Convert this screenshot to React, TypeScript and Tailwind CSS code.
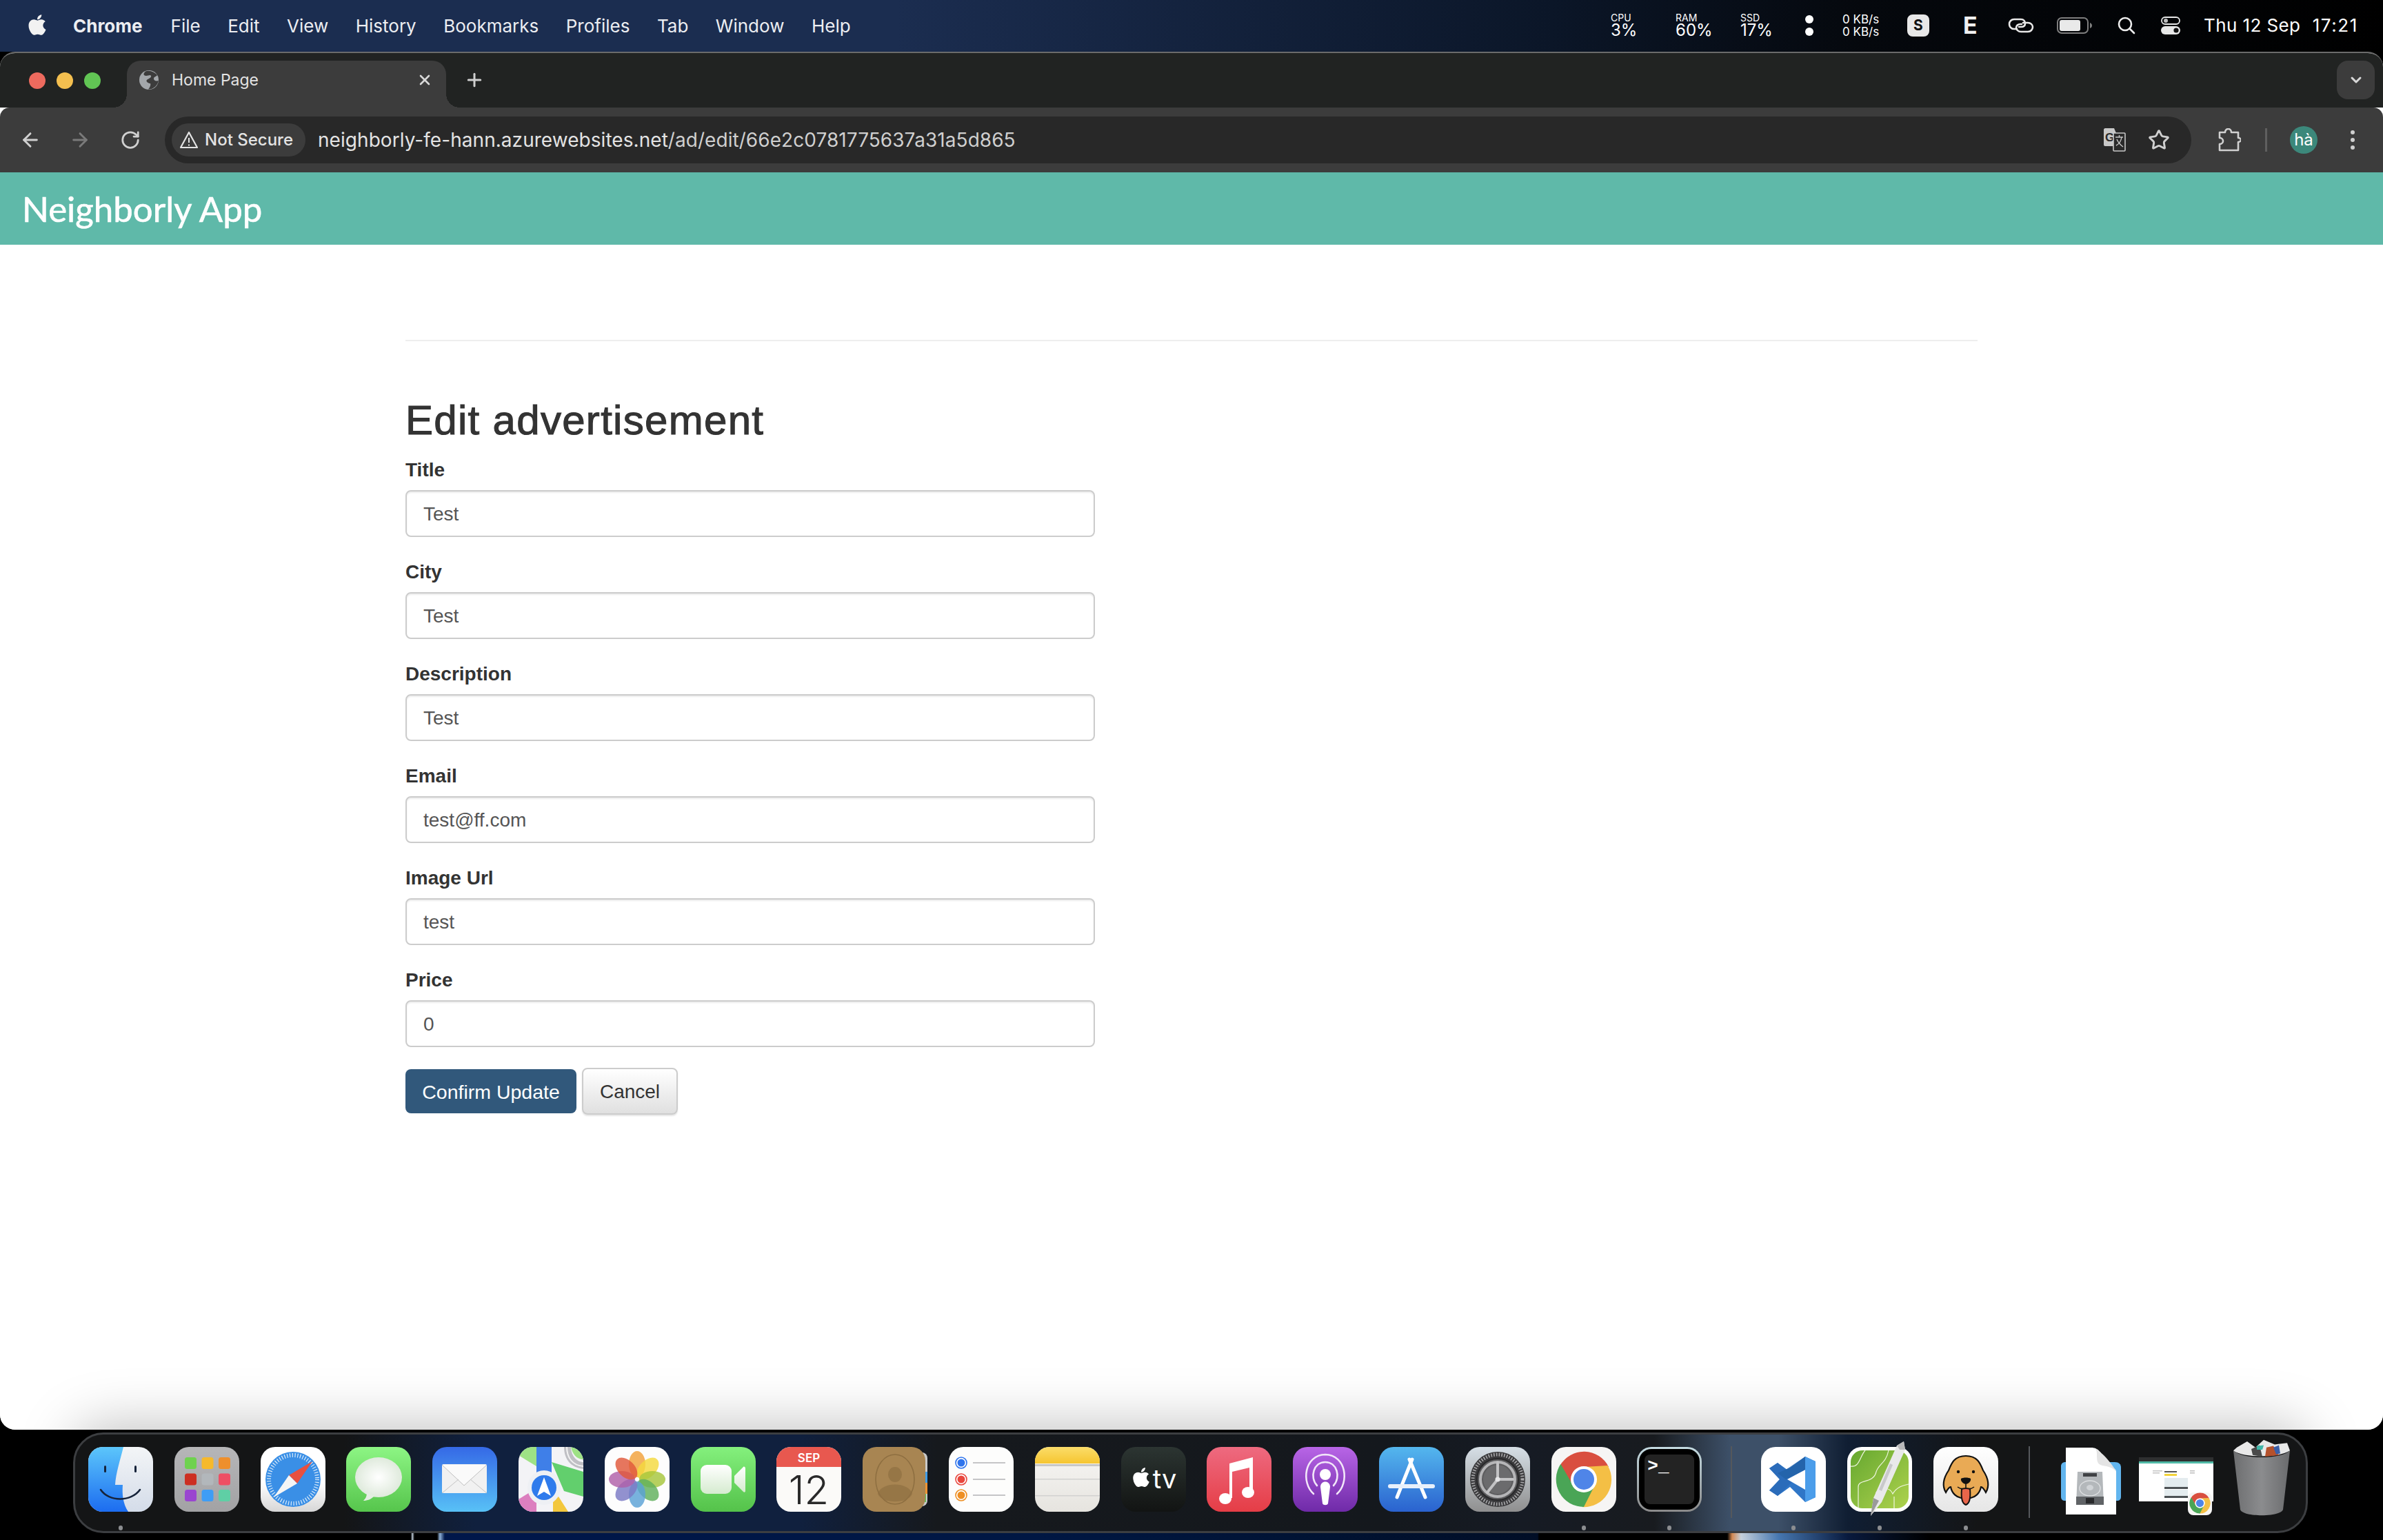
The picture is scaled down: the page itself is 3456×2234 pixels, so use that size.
import React from "react";
import { ArrowLeft, ArrowRight, RotateCw, Star, X, Plus, ChevronDown } from "lucide-react";
import { FaApple } from "react-icons/fa";

const ChromeMark = ({ cx, cy, r }: { cx: number; cy: number; r: number }) => {
  const red = "M-34.6,-20 A40,40 0 0 1 36,-18 L0,-18 A18,18 0 0 0 -15.6,9 Z";
  return (
    <g transform={`translate(${cx} ${cy}) scale(${r / 40})`}>
      <circle r="40" fill="#fff" />
      <path d={red} fill="#d94f3f" />
      <path d={red} fill="#f4bf45" transform="rotate(120)" />
      <path d={red} fill="#4aa556" transform="rotate(240)" />
      <circle r="19" fill="#fff" />
      <circle r="15" fill="#4f85e8" />
    </g>
  );
};

const Svg = ({ children }: { children: React.ReactNode }) => (
  <svg viewBox="0 0 94 94" className="w-[94px] h-[94px] overflow-visible block">
    {children}
  </svg>
);

const Finder = () => (
  <Svg>
    <defs>
      <linearGradient id="fa" x1="0" y1="0" x2="0" y2="1"><stop offset="0" stopColor="#5cc6fb" /><stop offset="1" stopColor="#1c6cf0" /></linearGradient>
      <linearGradient id="fb" x1="0" y1="0" x2="0" y2="1"><stop offset="0" stopColor="#f3f5f7" /><stop offset="1" stopColor="#d4dce9" /></linearGradient>
      <clipPath id="fc"><rect width="94" height="94" rx="21" /></clipPath>
    </defs>
    <g clipPath="url(#fc)">
      <rect width="94" height="94" fill="url(#fb)" />
      <path d="M0 0H51C46 20 40 38 39 55H50C49 68 50 82 58 94H0Z" fill="url(#fa)" />
    </g>
    <rect x="23" y="27" width="3" height="10" rx="1.5" fill="#16233a" />
    <rect x="67" y="27" width="3" height="10" rx="1.5" fill="#16233a" />
    <path d="M18 62C30 80 62 80 75 62" stroke="#16233a" strokeWidth="2.6" fill="none" strokeLinecap="round" />
  </Svg>
);

const Launchpad = () => {
  const c = ["#6fd24f", "#f6b92c", "#ee8f2c", "#cc2f22", "#b2b7bb", "#ee4f64", "#9a46d0", "#3e9df5", "#5fcfa5"];
  return (
    <Svg>
      <defs><linearGradient id="la" x1="0" y1="0" x2="0" y2="1"><stop offset="0" stopColor="#b6b6b8" /><stop offset="1" stopColor="#a2a2a4" /></linearGradient></defs>
      <rect width="94" height="94" rx="21" fill="url(#la)" />
      {c.map((col, i) => (
        <rect key={i} x={15 + (i % 3) * 24.5} y={15 + Math.floor(i / 3) * 23.5} width="17" height="17" rx="3.5" fill={col} />
      ))}
    </Svg>
  );
};

const Safari = () => (
  <Svg>
    <defs><linearGradient id="sa" x1="0" y1="0" x2="0" y2="1"><stop offset="0.55" stopColor="#fff" /><stop offset="1" stopColor="#d6d6d6" /></linearGradient></defs>
    <rect width="94" height="94" rx="21" fill="url(#sa)" />
    <circle cx="47" cy="47" r="40" fill="#3a8fe6" />
    <circle cx="47" cy="47" r="35" fill="none" stroke="#dcecfa" strokeWidth="6" strokeDasharray="1.2 2.6" />
    <path d="M75 21L53 53L41 41Z" fill="#e8503f" />
    <path d="M19 73L41 41L53 53Z" fill="#f5f5f5" />
  </Svg>
);

const Messages = () => (
  <Svg>
    <defs>
      <linearGradient id="ma" x1="0" y1="0" x2="0" y2="1"><stop offset="0" stopColor="#8df584" /><stop offset="1" stopColor="#56c54c" /></linearGradient>
      <radialGradient id="mb"><stop offset="0" stopColor="#ffffff" /><stop offset="1" stopColor="#dfeadc" /></radialGradient>
    </defs>
    <rect width="94" height="94" rx="21" fill="url(#ma)" />
    <ellipse cx="47" cy="44" rx="34" ry="29" fill="url(#mb)" />
    <path d="M30 66C30 72 28 75 25 78C31 78 36 76 41 71Z" fill="#e4eee2" />
  </Svg>
);

const Mail = () => (
  <Svg>
    <defs><linearGradient id="ml" x1="0" y1="0" x2="0" y2="1"><stop offset="0" stopColor="#3569e6" /><stop offset="1" stopColor="#58c1f6" /></linearGradient></defs>
    <rect width="94" height="94" rx="21" fill="url(#ml)" />
    <rect x="14" y="25" width="65" height="42" rx="2" fill="#f1f1f1" />
    <path d="M14 26L46 56L79 26" fill="#fafafa" stroke="#c0c0c0" strokeWidth="1" />
    <path d="M14 67L38 47M79 67L55 47" stroke="#c4c4c4" strokeWidth="1" />
  </Svg>
);

const Maps = () => (
  <Svg>
    <defs><clipPath id="mp"><rect width="94" height="94" rx="21" /></clipPath></defs>
    <g clipPath="url(#mp)">
      <rect width="94" height="94" fill="#f3f3f6" />
      <path d="M0 0H26V28L0 12Z" fill="#9ee285" />
      <path d="M48 22L94 36V72L66 64Z" fill="#62cf6d" />
      <rect x="26" y="0" width="22" height="40" fill="#3f7fe8" />
      <path d="M66 0C66 18 76 30 94 32V22C84 22 76 12 76 0Z" fill="#bfbfc4" />
      <path d="M70 0C70 15 78 27 94 28" stroke="#f2f2f2" strokeWidth="2" fill="none" />
      <path d="M76 0H94V18C84 18 78 10 76 0Z" fill="#9ee285" />
      <path d="M0 76L26 60V94H0Z" fill="#dc7fbf" />
      <path d="M50 94V78L58 72L72 94Z" fill="#f3c73d" />
    </g>
    <ellipse cx="37" cy="59" rx="24" ry="25" fill="#eef0f4" />
    <circle cx="37" cy="59" r="18" fill="#2f7bec" />
    <path d="M37 44L47 71L37 65L27 71Z" fill="#fff" />
  </Svg>
);

const Photos = () => {
  const cols = ["#f2a13b", "#f4d93e", "#a6c63c", "#5fb05c", "#5aa1d6", "#7a79c4", "#b05fa8", "#e0583b"];
  return (
    <Svg>
      <rect width="94" height="94" rx="21" fill="#fdfdfd" />
      {cols.map((c, i) => (
        <ellipse key={i} cx="47" cy="25" rx="12" ry="19" fill={c} opacity="0.82" transform={`rotate(${i * 45} 47 47)`} />
      ))}
    </Svg>
  );
};

const FaceTime = () => (
  <Svg>
    <defs>
      <linearGradient id="fta" x1="0" y1="0" x2="0" y2="1"><stop offset="0" stopColor="#84f07d" /><stop offset="1" stopColor="#54c24a" /></linearGradient>
      <linearGradient id="ftb" x1="0" y1="0" x2="0" y2="1"><stop offset="0" stopColor="#fff" /><stop offset="1" stopColor="#d5ebcf" /></linearGradient>
    </defs>
    <rect width="94" height="94" rx="21" fill="url(#fta)" />
    <rect x="14" y="26" width="45" height="42" rx="9" fill="url(#ftb)" />
    <path d="M63 42L76 29C77 28 79 29 79 31V64C79 66 77 66 76 65L63 52Z" fill="url(#ftb)" />
  </Svg>
);

const Calendar = () => (
  <Svg>
    <defs><clipPath id="ca"><rect width="94" height="94" rx="21" /></clipPath></defs>
    <g clipPath="url(#ca)">
      <rect width="94" height="94" fill="#fbfaf8" />
      <rect width="94" height="29" fill="#e8584f" />
    </g>
    <text x="47" y="22" textAnchor="middle" fontFamily="Inter, sans-serif" fontWeight="600" fontSize="17" fill="#fff">SEP</text>
    <text x="47" y="83" textAnchor="middle" fontFamily="Inter, sans-serif" fontWeight="300" fontSize="58" fill="#2a2a2a">12</text>
  </Svg>
);

const Contacts = () => (
  <Svg>
    <rect x="70" y="8" width="24" height="78" rx="8" fill="#c9c9c9" />
    <rect x="86" y="36" width="8" height="16" fill="#3f9de8" />
    <rect x="86" y="52" width="8" height="16" fill="#ee9434" />
    <rect x="86" y="68" width="6" height="12" fill="#5cc75a" />
    <rect width="91" height="94" rx="20" fill="#a88552" />
    <ellipse cx="47" cy="47" rx="28" ry="36" fill="none" stroke="#8e6f41" strokeWidth="1.6" />
    <ellipse cx="47" cy="40" rx="10" ry="11" fill="#8e6f41" opacity="0.7" />
    <path d="M22 68C27 50 67 50 72 68C66 83 28 83 22 68Z" fill="#8e6f41" opacity="0.7" />
  </Svg>
);

const Reminders = () => (
  <Svg>
    <rect width="94" height="94" rx="21" fill="#fdfdfc" />
    {[["#2f74ec", 23], ["#e8473d", 47], ["#ee8f23", 70]].map(([c, y], i) => (
      <g key={i}>
        <ellipse cx="18" cy={y as number} rx="8" ry="8" fill="#fff" stroke={c as string} strokeWidth="1.6" />
        <circle cx="18" cy={y as number} r="5.5" fill={c as string} />
        <rect x="35" y={(y as number) - 1} width="47" height="2" fill="#c5c5c7" />
      </g>
    ))}
  </Svg>
);

const Notes = () => (
  <Svg>
    <defs>
      <clipPath id="na"><rect width="94" height="94" rx="21" /></clipPath>
      <linearGradient id="nb" x1="0" y1="0" x2="0" y2="1"><stop offset="0" stopColor="#fbdd6a" /><stop offset="1" stopColor="#f6c530" /></linearGradient>
      <linearGradient id="nc" x1="0" y1="0" x2="0" y2="1"><stop offset="0" stopColor="#f8f7f5" /><stop offset="1" stopColor="#e6e4df" /></linearGradient>
    </defs>
    <g clipPath="url(#na)">
      <rect width="94" height="94" fill="url(#nc)" />
      <rect width="94" height="24" fill="url(#nb)" />
      <rect y="25" width="94" height="3" fill="#c8c8c6" />
      <rect y="46" width="94" height="1.5" fill="#d2d2d0" />
      <rect y="70" width="94" height="1.5" fill="#d2d2d0" />
    </g>
  </Svg>
);

const Tv = () => (
  <div className="relative w-[94px] h-[94px] rounded-[21px] bg-gradient-to-b from-[#2c3532] to-[#121413] flex items-center justify-center text-white">
    <FaApple size={32} className="mb-[6px]" />
    <span className="font-['Inter',sans-serif] text-[38px] leading-none font-normal ml-[1px] mb-[2px]">tv</span>
  </div>
);

const Music = () => (
  <Svg>
    <defs><linearGradient id="mu" x1="0" y1="0" x2="0" y2="1"><stop offset="0" stopColor="#ee6a80" /><stop offset="1" stopColor="#e53d46" /></linearGradient></defs>
    <rect width="94" height="94" rx="21" fill="url(#mu)" />
    <path d="M33 24L67 15V66H62V30L37 36V74H33Z" fill="#fff" />
    <ellipse cx="27" cy="75" rx="9" ry="8" fill="#fff" />
    <ellipse cx="60" cy="66" rx="9" ry="8" fill="#fff" />
  </Svg>
);

const Podcasts = () => (
  <Svg>
    <defs><linearGradient id="po" x1="0" y1="0" x2="0" y2="1"><stop offset="0" stopColor="#b865e6" /><stop offset="1" stopColor="#6f2aa8" /></linearGradient></defs>
    <rect width="94" height="94" rx="21" fill="url(#po)" />
    <path d="M30 68C12 52 16 12 47 11C78 12 82 52 64 68" fill="none" stroke="#f2e6f9" strokeWidth="2.6" strokeLinecap="round" />
    <path d="M35 56C24 44 30 22 47 22C64 22 70 44 59 56" fill="none" stroke="#f2e6f9" strokeWidth="2.6" strokeLinecap="round" />
    <circle cx="47" cy="40" r="8" fill="#fff" />
    <path d="M40 58C40 48 54 48 54 58L51 82C50 85 44 85 43 82Z" fill="#fff" />
  </Svg>
);

const AppStore = () => (
  <Svg>
    <defs><linearGradient id="ap" x1="0" y1="0" x2="0" y2="1"><stop offset="0" stopColor="#54b7ee" /><stop offset="1" stopColor="#2a62cf" /></linearGradient></defs>
    <rect width="94" height="94" rx="21" fill="url(#ap)" />
    <g stroke="#fff" strokeLinecap="round" fill="none">
      <path d="M48 18L26 73" strokeWidth="5" />
      <path d="M44 18L67 73" strokeWidth="5" />
      <path d="M16 57H78" strokeWidth="6" stroke="#e8f0fb" />
    </g>
  </Svg>
);

const Settings = () => (
  <Svg>
    <defs><linearGradient id="se" x1="0" y1="0" x2="0" y2="1"><stop offset="0" stopColor="#d6dfe6" /><stop offset="1" stopColor="#8f8f8f" /></linearGradient></defs>
    <rect width="94" height="94" rx="21" fill="url(#se)" />
    <circle cx="47" cy="47" r="40" fill="#3a3a3c" />
    <circle cx="47" cy="47" r="36" fill="none" stroke="#a8a8aa" strokeWidth="5" strokeDasharray="1.6 2.2" />
    <circle cx="47" cy="47" r="30" fill="#5c5c5e" stroke="#28282a" strokeWidth="2" />
    <circle cx="47" cy="47" r="25" fill="none" stroke="#b5b5b7" strokeWidth="4" />
    <circle cx="47" cy="47" r="21" fill="#6b6b6d" />
    <g stroke="#c2c2c4" strokeWidth="4" strokeLinecap="round">
      <path d="M47 47L47 23" />
      <path d="M47 47L69 47" />
      <path d="M47 47L32 66" />
    </g>
    <circle cx="47" cy="47" r="3.5" fill="#e4e4e6" />
  </Svg>
);

const ChromeIcon = () => (
  <Svg>
    <rect width="94" height="94" rx="21" fill="#f6f5f4" />
    <ChromeMark cx={47} cy={47} r={40} />
  </Svg>
);

const Terminal = () => (
  <div className="w-[94px] h-[94px] rounded-[21px] bg-gradient-to-b from-[#c4dbe2] to-[#8a8a8a] p-[3px]">
    <div className="w-full h-full rounded-[18px] bg-black p-[8px]">
      <div className="w-full h-full rounded-[8px] bg-[#232323] relative">
        <span className="absolute left-[4px] top-[0px] font-['Liberation_Mono',monospace] text-[26px] leading-[34px] font-bold text-white">&gt;_</span>
      </div>
    </div>
  </div>
);

const VsCode = () => (
  <Svg>
    <rect width="94" height="94" rx="21" fill="#fff" />
    <path d="M64 14L79 21V73L64 80L42 58L24 71L12 63L27 47L12 31L24 23L42 36Z" fill="#2f76c7" />
    <path d="M64 14L79 21V73L64 80Z" fill="#4b9dea" />
    <path d="M24 23L12 31L27 47L12 63L24 71L64 33V14L36 33Z" fill="#2b6ab6" opacity="0.75" />
    <path d="M64 33L38 47L64 62Z" fill="#fff" />
    <path d="M64 14V33L36 47L24 38L42 30Z" fill="#2464ab" />
  </Svg>
);

const PenMap = () => (
  <Svg>
    <defs><linearGradient id="pm" x1="0" y1="0" x2="1" y2="1"><stop offset="0" stopColor="#66a830" /><stop offset="1" stopColor="#aed24d" /></linearGradient></defs>
    <rect width="94" height="94" rx="21" fill="#fff" />
    <rect x="5" y="5" width="84" height="84" rx="17" fill="url(#pm)" />
    <g stroke="#eef5df" strokeWidth="1.2" fill="none">
      <path d="M5 28C18 30 18 14 26 5" />
      <path d="M16 89V58C16 46 38 54 42 36C46 24 56 24 60 5" />
      <path d="M42 89V66C48 58 62 58 66 68C72 58 80 56 89 54" />
      <path d="M68 89V72" />
    </g>
    <path d="M34 100L38 74L72 -2L82 -8L84 4L50 80Z" fill="#e9e9ea" />
    <path d="M34 100L38 74L46 78Z" fill="#9a9a9a" />
    <path d="M72 -2L82 -8L84 4L76 4Z" fill="#b9b9bb" />
    <path d="M62 24L66 26L50 64L46 62Z" fill="#c9c9cb" />
  </Svg>
);

const Dog = () => (
  <Svg>
    <defs><linearGradient id="dg" x1="0" y1="0" x2="0" y2="1"><stop offset="0" stopColor="#fff" /><stop offset="1" stopColor="#e6e6e6" /></linearGradient></defs>
    <rect width="94" height="94" rx="21" fill="url(#dg)" />
    <path d="M47 13C30 13 26 24 22 34C14 46 12 56 18 66C21 60 24 58 25 58C27 68 34 73 40 74L47 74L54 74C60 73 67 68 69 58C70 58 73 60 76 66C82 56 80 46 72 34C68 24 64 13 47 13Z" fill="#e9aa55" stroke="#111" strokeWidth="2.2" />
    <circle cx="36" cy="36" r="2.2" fill="#111" />
    <circle cx="58" cy="36" r="2.2" fill="#111" />
    <path d="M40 46C43 44 51 44 54 46C55 50 50 54 47 54C44 54 39 50 40 46Z" fill="#111" />
    <path d="M47 54V60M35 58C40 62 44 61 47 60C50 61 54 62 59 58" stroke="#111" strokeWidth="1.6" fill="none" />
    <path d="M41 61C44 60 50 60 53 61C54 72 53 82 47 84C41 82 40 72 41 61Z" fill="#e8654a" stroke="#111" strokeWidth="2" />
  </Svg>
);

const DocFolder = () => (
  <Svg>
    <path d="M0 28C0 24 3 22 6 22H78C84 22 87 25 87 30V72C87 76 85 78 81 78H6C2 78 0 76 0 72Z" fill="#62b5ee" />
    <path d="M7 1H43C50 1 54 3 59 10L74 28C75 30 80 32 80 36V98H7Z" fill="#fff" />
    <path d="M48 1C50 3 52 4 52 10C52 20 52 25 60 27C68 28 76 30 80 36C74 24 60 8 48 1Z" fill="#e4e4e4" />
    <path d="M24 36H60L62 84H22Z" fill="#b4b8bb" />
    <rect x="22" y="72" width="40" height="12" fill="#606366" />
    <rect x="32" y="38" width="20" height="5" fill="#404245" />
    <ellipse cx="42" cy="60" rx="15" ry="11" fill="none" stroke="#dddfe1" strokeWidth="1.4" />
    <ellipse cx="42" cy="59" rx="5" ry="4" fill="#d0d3d6" />
    <rect x="36" y="74" width="12" height="8" fill="#28292b" />
  </Svg>
);

const WindowThumb = () => (
  <Svg>
    <rect x="0" y="15" width="108" height="64" fill="#fff" />
    <rect x="0" y="15" width="108" height="6" fill="#2e2f30" />
    <rect x="0" y="21" width="108" height="3" fill="#4fb9a6" />
    <rect x="20" y="34" width="14" height="1.5" fill="#c4c4c4" />
    <rect x="20" y="37" width="10" height="1.5" fill="#c4c4c4" />
    <rect x="37" y="35" width="18" height="2" fill="#555" />
    <rect x="37" y="39" width="18" height="3" fill="#f3d33b" />
    <rect x="37" y="45" width="34" height="13" fill="#e4ecef" />
    <rect x="37" y="58" width="34" height="3" fill="#4d5255" />
    <rect x="37" y="62" width="34" height="9" fill="#e4ecef" />
    <rect x="37" y="71" width="34" height="3" fill="#4d5255" />
    <rect x="74" y="34" width="7" height="1.5" fill="#bdbdbd" />
    <rect x="74" y="37" width="7" height="1.5" fill="#bdbdbd" />
    <rect x="71" y="66" width="35" height="33" rx="8" fill="#f6f5f4" />
    <ChromeMark cx={88.5} cy={81.5} r={15} />
  </Svg>
);

const Trash = () => (
  <Svg>
    <defs><linearGradient id="tr" x1="0" y1="0" x2="1" y2="0"><stop offset="0" stopColor="#6d6e70" /><stop offset="0.5" stopColor="#8b8c8e" /><stop offset="1" stopColor="#6a6b6d" /></linearGradient></defs>
    <g transform="translate(0 -8) scale(1 1.1)">
      <path d="M0 12C14 24 68 24 82 12L72 90C68 100 14 100 10 90Z" fill="url(#tr)" />
      <path d="M5 8L20 0L32 8L44 -2L60 4L78 2L82 12C66 22 14 22 0 12Z" fill="#e8e8e8" />
      <path d="M26 10L38 5L42 20L28 18Z" fill="#4a4a4a" />
      <path d="M34 6L44 5L42 11L34 11Z" fill="#3fb6a8" />
      <path d="M48 8L58 6L66 18L46 20Z" fill="#b5512c" />
      <path d="M58 8L66 5L68 16L62 17Z" fill="#3a5fa8" />
    </g>
  </Svg>
);

const DockItem = ({ icon, dot }: { icon: React.ReactNode; dot?: boolean }) => (
  <div className="w-[94px] flex flex-col items-center">
    {icon}
    <div className={`mt-[20px] w-[6px] h-[7px] rounded-full ${dot ? "bg-[#8b8d90]" : "bg-transparent"}`} />
  </div>
);

const Dock = () => (
  <div className="relative z-10 ml-[106px] mt-[4px] w-[3241px] h-[146px] rounded-[44px] border-[3px] border-[#3c3e41] pt-[18px] pl-[19px] flex shadow-[0_-10px_80px_rgba(0,0,0,0.25)] bg-[linear-gradient(90deg,#141516_0px,#141516_390px,#10203e_580px,#10203e_1050px,#16191d_1250px,#14181d_1900px,#161b24_2100px,#181b1f_2290px,#3d5068_2400px,#3d5068_2470px,#101e33_2570px,#141516_2760px,#141516_3241px)]">
    <div className="flex gap-[30.8px]">
      <DockItem icon={<Finder />} dot />
      <DockItem icon={<Launchpad />} />
      <DockItem icon={<Safari />} />
      <DockItem icon={<Messages />} />
      <DockItem icon={<Mail />} />
      <DockItem icon={<Maps />} />
      <DockItem icon={<Photos />} />
      <DockItem icon={<FaceTime />} />
      <DockItem icon={<Calendar />} />
      <DockItem icon={<Contacts />} />
      <DockItem icon={<Reminders />} />
      <DockItem icon={<Notes />} />
      <DockItem icon={<Tv />} />
      <DockItem icon={<Music />} />
      <DockItem icon={<Podcasts />} />
      <DockItem icon={<AppStore />} />
      <DockItem icon={<Settings />} />
      <DockItem icon={<ChromeIcon />} dot />
      <DockItem icon={<Terminal />} dot />
    </div>
    <div className="w-[2px] h-[104px] bg-[#55585c] ml-[42px] mr-[42px] -mt-[1px]" />
    <div className="flex gap-[31px]">
      <DockItem icon={<VsCode />} dot />
      <DockItem icon={<PenMap />} dot />
      <DockItem icon={<Dog />} dot />
    </div>
    <div className="w-[2px] h-[104px] bg-[#55585c] ml-[44px] mr-[45px] -mt-[1px]" />
    <div className="flex">
      <div className="w-[113px]"><DocFolder /></div>
      <div className="w-[137px]"><WindowThumb /></div>
      <div className="w-[90px]"><Trash /></div>
    </div>
  </div>
);

const Stat = ({ label, value, w }: { label: string; value: string; w: string }) => (
  <div className={`${w} -mt-[3px]`}>
    <div className="text-[14px] leading-[15px]">{label}</div>
    <div className="text-[24px] leading-[22px]">{value}</div>
  </div>
);

const MenuBar = () => {
  const items = ["File", "Edit", "View", "History", "Bookmarks", "Profiles", "Tab", "Window", "Help"];
  return (
    <div className="h-[75px] shrink-0 flex items-center text-[#eceef2] font-['Inter',sans-serif] bg-[linear-gradient(90deg,#1b2d50_0px,#1b2d50_1300px,#0b1628_2250px,#05080d_2700px,#000000_3456px)]">
      <FaApple className="ml-[37px] mr-[35px] text-[#f2f2f2] -mt-[3px]" size={34} />
      <span className="text-[26px] font-bold mr-[41px]">Chrome</span>
      <div className="flex gap-[39.5px] text-[26px]">
        {items.map((m) => (
          <span key={m}>{m}</span>
        ))}
      </div>
      <div className="ml-auto flex items-center text-white">
        <Stat label="CPU" value="3%" w="w-[94px]" />
        <Stat label="RAM" value="60%" w="w-[94px]" />
        <Stat label="SSD" value="17%" w="w-[93px]" />
        <div className="w-[14px] flex flex-col items-center gap-[6px] -mt-[2px]">
          <div className="w-[12px] h-[12px] rounded-full bg-white" />
          <div className="w-[12px] h-[12px] rounded-full bg-white" />
        </div>
        <div className="ml-[41px] w-[94px] text-[17px] leading-[18px] -mt-[2px] whitespace-nowrap">
          <div>0 KB/s</div>
          <div>0 KB/s</div>
        </div>
        <div className="w-[32px] h-[32px] rounded-[8px] bg-[#e8e8e8] text-[#111] flex items-center justify-center text-[21px] font-bold -mt-[2px]">S</div>
        <span className="ml-[49px] w-[24px] text-[34px] font-bold leading-none text-[#f0f0f0] -mt-[2px]">E</span>
        <svg className="ml-[41px] w-[38px] h-[24px] -mt-[2px]" viewBox="0 0 38 24" fill="none" stroke="#e8e8e8" strokeWidth="2.6">
          <path d="M13 17H9C4 17 2 13 2 10C2 6 5 3 9 3H19C23 3 25 6 25 9C25 12 23 14 19 14H16" strokeLinecap="round" />
          <path d="M22 8H29C33 8 36 11 36 14C36 18 33 21 29 21H19C15 21 12 18 12 15C12 12 15 10 18 10H20" strokeLinecap="round" />
        </svg>
        <svg className="ml-[33px] w-[52px] h-[24px] -mt-[2px]" viewBox="0 0 52 24" fill="none">
          <rect x="1" y="1" width="44" height="22" rx="6" stroke="#7e7e7e" strokeWidth="2" />
          <rect x="4" y="4" width="30" height="16" rx="3" fill="#e9e9e9" />
          <path d="M48 8C50 9 51 10 51 12C51 14 50 15 48 16Z" fill="#7e7e7e" />
        </svg>
        <svg className="ml-[36px] w-[26px] h-[26px] -mt-[2px]" viewBox="0 0 26 26" fill="none" stroke="#ededed" strokeWidth="2.6">
          <circle cx="11" cy="11" r="9" />
          <path d="M17.5 17.5L24 24" strokeLinecap="round" />
        </svg>
        <svg className="ml-[37px] w-[28px] h-[26px] -mt-[2px]" viewBox="0 0 28 26">
          <rect x="1" y="1" width="26" height="10" rx="5" fill="none" stroke="#e8e8e8" strokeWidth="1.8" />
          <circle cx="7" cy="6" r="3" fill="#bdbdbd" />
          <rect x="0" y="14" width="28" height="12" rx="6" fill="#e8e8e8" />
          <circle cx="22" cy="20" r="3.6" fill="#111" />
        </svg>
        <div className="ml-[34px] mr-[36px] w-[224px] flex justify-between text-[26px] whitespace-nowrap -mt-[2px]">
          <span className="tracking-[0.4px]">Thu 12 Sep</span>
          <span className="tracking-[1.6px]">17:21</span>
        </div>
      </div>
    </div>
  );
};

const Globe = () => (
  <svg viewBox="0 0 28 28" className="w-[28px] h-[28px]">
    <circle cx="14" cy="14" r="14" fill="#a3a7ab" />
    <path d="M9 1.5C5 5 6 8 10 8C13 8 16 6 17 8C18 11 13 12 11 14C9 16 13 19 16 19C17 22 15 25 13 27.5C21 28 27 21 27.8 15C24 16 21 15 21 12C21 9 25 9 26 7C23 3 15 -1 9 1.5Z" fill="#3c3c3c" />
  </svg>
);

const Translate = () => (
  <svg viewBox="0 0 34 34" className="w-[34px] h-[34px]">
    <path d="M2 2C2 1 3 0 4 0H17L28 26H4C3 26 2 25 2 24Z" fill="#c8c8c8" />
    <text x="4" y="19" fontFamily="'Liberation Sans',sans-serif" fontWeight="700" fontSize="17" fill="#2a2a2a">G</text>
    <rect x="16" y="7" width="17" height="26" rx="1" fill="#2a2a2a" stroke="#c8c8c8" strokeWidth="1.6" />
    <path d="M19 13H30M24.5 10V13M28 13C27 19 24 23 20 25M21 16C23 21 26 24 30 27" stroke="#c8c8c8" strokeWidth="1.4" fill="none" />
  </svg>
);

const ExtIcon = () => (
  <svg viewBox="0 0 34 34" className="w-[34px] h-[34px]" fill="none" stroke="#d0d0d0" strokeWidth="2.6" strokeLinejoin="round">
    <path d="M3 6H11C11 2 14 1 15.500 1C17 1 20 2 20 6H30V14C33 14 34 16 34 17C34 18 33 20 30 20V32H3V23C7 23 8 20 8 18.500C8 17 7 14 3 14Z" />
  </svg>
);

const Toolbar = () => (
  <div className="h-[94px] shrink-0 bg-[#3c3c3c] rounded-t-[14px] flex items-center pl-[28px] text-[#c8c8c8] font-['Inter',sans-serif]">
    <ArrowLeft size={32} strokeWidth={2.2} className="text-[#d0d0d0]" />
    <ArrowRight size={32} strokeWidth={2.2} className="ml-[40px] text-[#7a7a7a]" />
    <RotateCw size={30} strokeWidth={2.2} className="ml-[42px] text-[#d0d0d0]" />
    <div className="ml-[35px] w-[2939px] h-[68px] rounded-full bg-[#282828] flex items-center pl-[10px] pr-[31px]">
      <div className="h-[48px] w-[194px] rounded-full bg-[#3c3c3c] flex items-center pl-[11px] text-[#e3e3e3] whitespace-nowrap">
        <svg viewBox="0 0 28 28" className="w-[28px] h-[28px]" fill="none" stroke="#e3e3e3" strokeWidth="2.2" strokeLinejoin="round">
          <path d="M14 3L26 25H2Z" />
          <path d="M14 11V18M14 20.500V22.500" strokeWidth="2" />
        </svg>
        <span className="ml-[9px] text-[24px] font-medium">Not Secure</span>
      </div>
      <div className="ml-[18px] text-[28px] tracking-[0.05px] text-[#e3e3e3] whitespace-nowrap">
        neighborly-fe-hann.azurewebsites.net<span className="text-[#cfcfcf]">/ad/edit/66e2c0781775637a31a5d865</span>
      </div>
      <div className="ml-auto flex items-center">
        <Translate />
        <Star size={32} strokeWidth={2.2} className="ml-[32px] text-[#cfcfcf]" />
      </div>
    </div>
    <div className="ml-[38px]"><ExtIcon /></div>
    <div className="ml-[35px] w-[3px] h-[34px] bg-[#5f5f5f]" />
    <div className="ml-[33px] w-[40px] h-[40px] rounded-full bg-[#3c887b] text-white flex items-center justify-center text-[24px]">hà</div>
    <div className="ml-[48px] flex flex-col gap-[5px]">
      <div className="w-[6px] h-[6px] rounded-full bg-[#cfcfcf]" />
      <div className="w-[6px] h-[6px] rounded-full bg-[#cfcfcf]" />
      <div className="w-[6px] h-[6px] rounded-full bg-[#cfcfcf]" />
    </div>
  </div>
);

const TabStrip = () => (
  <div className="h-[79px] shrink-0 flex bg-[#212322] font-['Inter',sans-serif]">
    <div className="flex items-center gap-[16px] pl-[42px] h-[80px]">
      <div className="w-[24px] h-[24px] rounded-full bg-[#ed6a5e]" />
      <div className="w-[24px] h-[24px] rounded-full bg-[#f4bf4f]" />
      <div className="w-[24px] h-[24px] rounded-full bg-[#61c554]" />
    </div>
    <div className="relative ml-[38px] mt-[11px] w-[463px] h-[68px] bg-[#3c3c3c] rounded-t-[20px] flex items-center pl-[18px] pr-[19px] text-[#e3e3e3] pb-[12px]">
      <div className="absolute -left-[20px] bottom-0 w-[20px] h-[20px] bg-[radial-gradient(circle_at_0_0,transparent_20px,#3c3c3c_20px)]" />
      <div className="absolute -right-[20px] bottom-0 w-[20px] h-[20px] bg-[radial-gradient(circle_at_100%_0,transparent_20px,#3c3c3c_20px)]" />
      <Globe />
      <span className="ml-[19px] text-[23px]">Home Page</span>
      <X size={24} strokeWidth={2.6} className="ml-auto text-[#d8d8d8]" />
    </div>
    <Plus size={30} strokeWidth={2.4} className="ml-[26px] mt-[24px] text-[#cfcfcf]" />
    <div className="ml-auto mr-[12px] mt-[11px] w-[55px] h-[56px] rounded-[16px] bg-[#3c3c3c] flex items-center justify-center">
      <ChevronDown size={24} strokeWidth={3} className="text-[#d8d8d8]" />
    </div>
  </div>
);

const Field = ({ label, value }: { label: string; value: string }) => (
  <div className="mb-[30px]">
    <label className="block text-[28px] leading-[42px] font-bold text-[#333] mb-[8px]">{label}</label>
    <input
      readOnly
      value={value}
      className="block w-[1000px] h-[68px] rounded-[8px] border-2 border-[#ccc] bg-white px-[24px] pt-[2px] text-[28px] text-[#555] shadow-[inset_0_2px_2px_rgba(0,0,0,0.075)] outline-none"
    />
  </div>
);

export default function App() {
  return (
    <div className="relative w-[3456px] h-[2234px] overflow-hidden bg-black flex flex-col">
      <MenuBar />
      <div className="flex-1 min-h-0 flex flex-col overflow-hidden rounded-t-[22px] rounded-b-[22px] border-t-2 border-[#6b6b6b] bg-white">
        <TabStrip />
        <Toolbar />
        <div className="h-[105px] shrink-0 bg-[#5fb9a9] pl-[32px] flex items-center">
          <span className="text-white text-[51px] font-['Lato',sans-serif] leading-none [-webkit-text-stroke:0.6px_#fff]">Neighborly App</span>
        </div>
        <div className="flex-1 bg-white font-['Liberation_Sans',sans-serif]">
          <div className="w-[2280px] mx-auto">
            <hr className="mt-[138px] border-0 h-[2px] bg-[#eee]" />
            <h1 className="mt-[82px] mb-[18px] text-[60px] leading-[66px] tracking-[1.3px] text-[#333] font-normal [-webkit-text-stroke:1.1px_#333]">Edit advertisement</h1>
            <Field label="Title" value="Test" />
            <Field label="City" value="Test" />
            <Field label="Description" value="Test" />
            <Field label="Email" value="test@ff.com" />
            <Field label="Image Url" value="test" />
            <Field label="Price" value="0" />
            <div className="flex items-start gap-[8px]">
              <button className="mt-[2px] w-[248px] h-[64px] rounded-[8px] bg-[#31587b] text-white text-[28.500px] pt-[2px]">Confirm Update</button>
              <button className="w-[139px] h-[68px] rounded-[8px] border-2 border-[#ccc] bg-gradient-to-b from-white to-[#e0e0e0] text-[#333] text-[28px] pt-[2px] shadow-[0_2px_2px_rgba(0,0,0,0.1)]">Cancel</button>
            </div>
          </div>
        </div>
      </div>
      <Dock />
      <div className="h-[10px] shrink-0 bg-[linear-gradient(90deg,#000_0px,#000_596px,#d8e6f5_598px,#000_601px,#000_634px,#9fc4ee_638px,#001a52_645px,#001a4a_1500px,#02102a_2230px,#000_2232px,#000_2505px,#e8965a_2512px,#d8e4f0_2525px,#4d82c0_2580px,#0a1d44_2680px,#000_2800px,#000_3456px)]" />
    </div>
  );
}
